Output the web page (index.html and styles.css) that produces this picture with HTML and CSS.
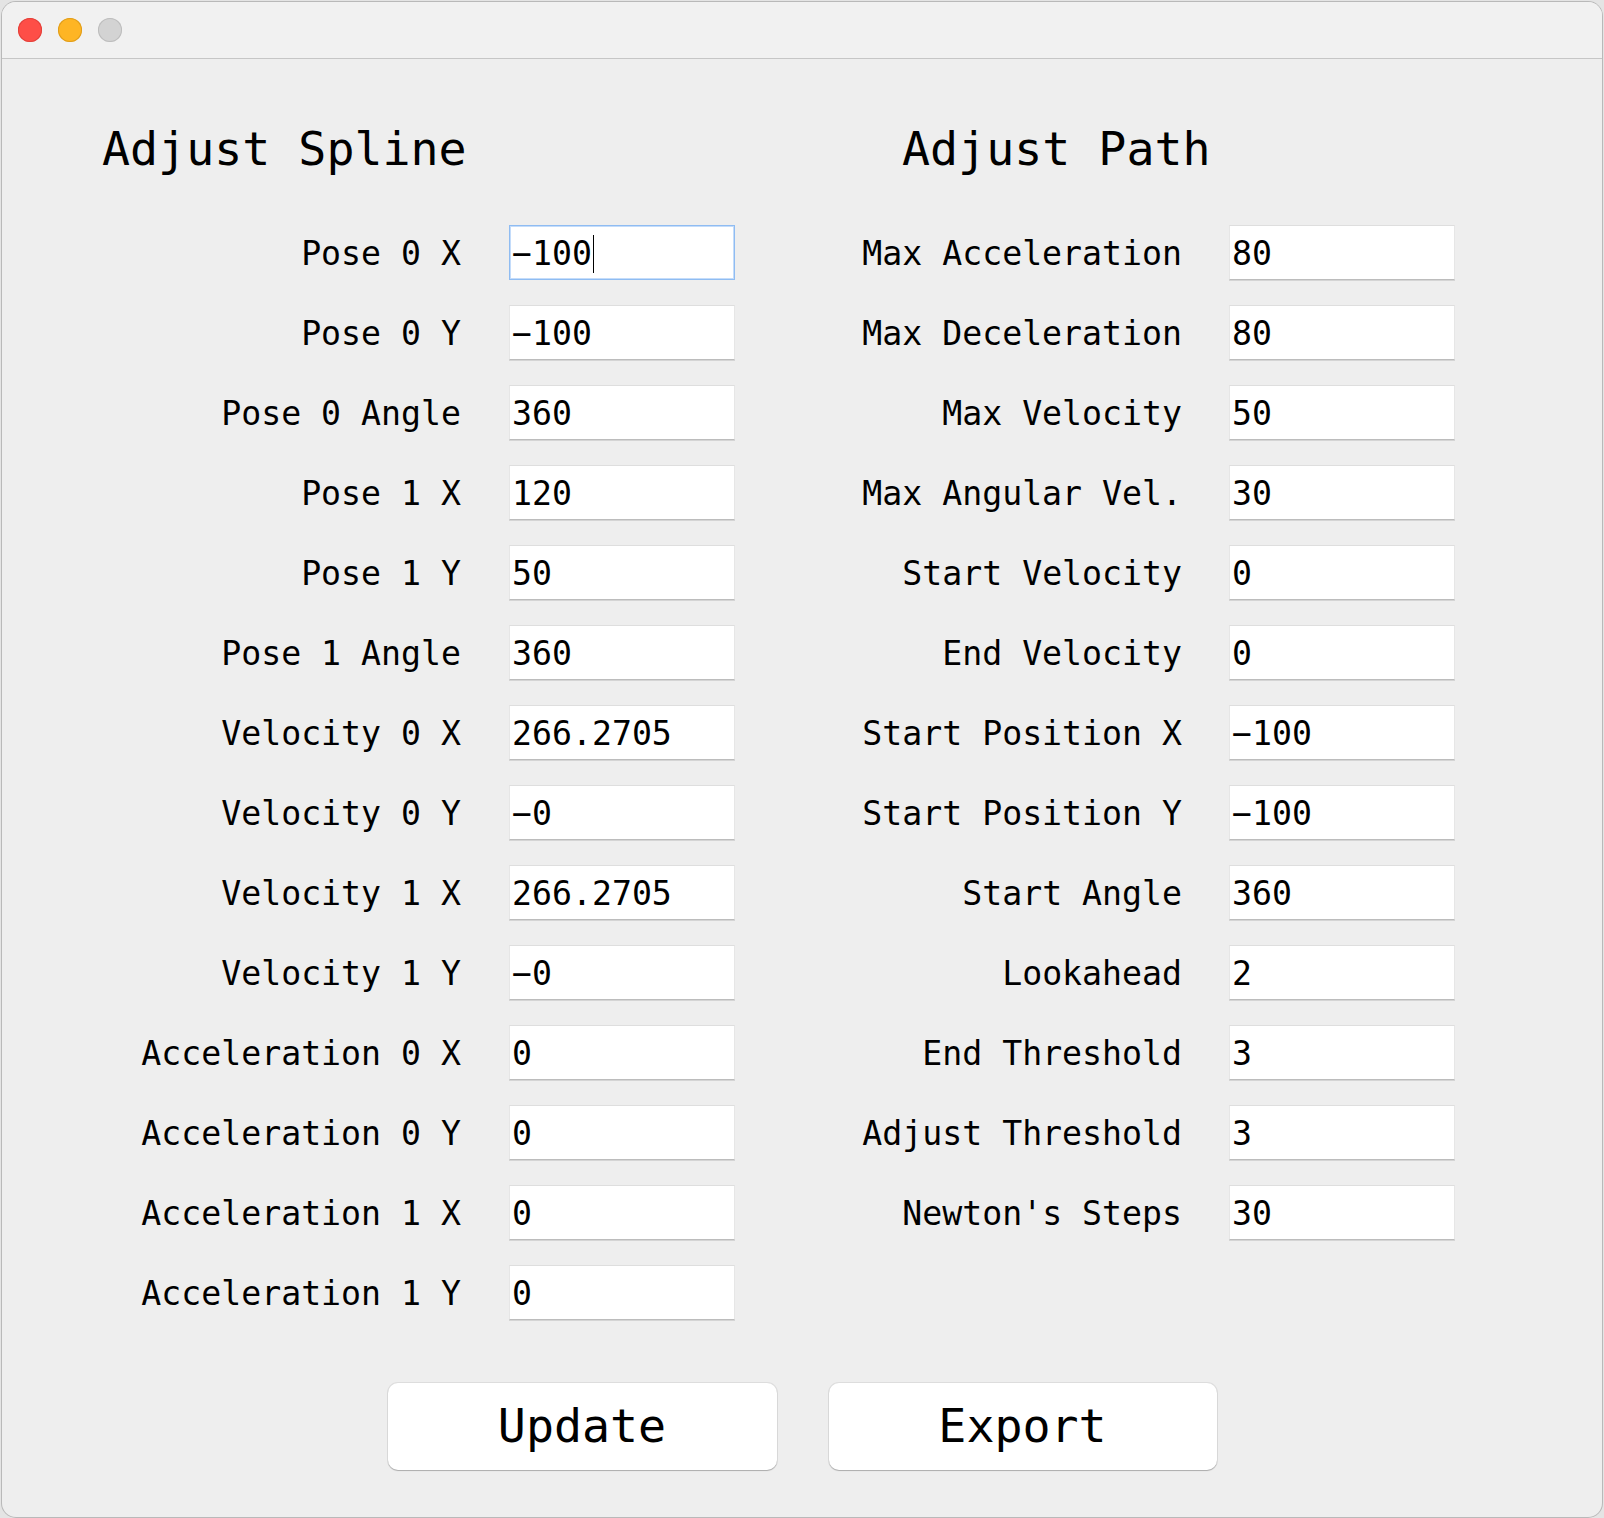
FILE: index.html
```html
<!DOCTYPE html>
<html lang="en">
<head>
<meta charset="utf-8">
<title>Adjust Spline</title>
<link rel="stylesheet" href="styles.css">
</head>
<body>
<div class="window">
  <div class="titlebar">
    <span class="light red"></span>
    <span class="light yellow"></span>
    <span class="light gray"></span>
  </div>
  <div class="content">
    <div class="panels">
      <section class="panel left">
        <h2 class="heading">Adjust Spline</h2>
        <div class="form form-left">
          <div class="label">Pose 0 X</div><div class="field focused">−100<span class="caret"></span></div>
          <div class="label">Pose 0 Y</div><div class="field">−100</div>
          <div class="label">Pose 0 Angle</div><div class="field">360</div>
          <div class="label">Pose 1 X</div><div class="field">120</div>
          <div class="label">Pose 1 Y</div><div class="field">50</div>
          <div class="label">Pose 1 Angle</div><div class="field">360</div>
          <div class="label">Velocity 0 X</div><div class="field">266.2705</div>
          <div class="label">Velocity 0 Y</div><div class="field">−0</div>
          <div class="label">Velocity 1 X</div><div class="field">266.2705</div>
          <div class="label">Velocity 1 Y</div><div class="field">−0</div>
          <div class="label">Acceleration 0 X</div><div class="field">0</div>
          <div class="label">Acceleration 0 Y</div><div class="field">0</div>
          <div class="label">Acceleration 1 X</div><div class="field">0</div>
          <div class="label">Acceleration 1 Y</div><div class="field">0</div>
        </div>
      </section>
      <section class="panel right">
        <h2 class="heading heading-right">Adjust Path</h2>
        <div class="form form-right">
          <div class="label">Max Acceleration</div><div class="field">80</div>
          <div class="label">Max Deceleration</div><div class="field">80</div>
          <div class="label">Max Velocity</div><div class="field">50</div>
          <div class="label">Max Angular Vel.</div><div class="field">30</div>
          <div class="label">Start Velocity</div><div class="field">0</div>
          <div class="label">End Velocity</div><div class="field">0</div>
          <div class="label">Start Position X</div><div class="field">−100</div>
          <div class="label">Start Position Y</div><div class="field">−100</div>
          <div class="label">Start Angle</div><div class="field">360</div>
          <div class="label">Lookahead</div><div class="field">2</div>
          <div class="label">End Threshold</div><div class="field">3</div>
          <div class="label">Adjust Threshold</div><div class="field">3</div>
          <div class="label">Newton's Steps</div><div class="field">30</div>
        </div>
      </section>
    </div>
    <div class="buttons">
      <button class="btn btn-update">Update</button>
      <button class="btn btn-export">Export</button>
    </div>
  </div>
</div>
</body>
</html>
```
FILE: styles.css
```css
* { box-sizing: border-box; }

html, body {
  margin: 0;
  padding: 0;
}

body {
  background: #e4e4e4;
  padding: 2px 2px 1px 2px;
  font-family: "DejaVu Sans Mono", "Liberation Mono", monospace;
  color: #000;
}

.window {
  width: 1600px;
  height: 1515px;
  background: #eeeeee;
  border-radius: 14px;
  overflow: hidden;
  box-shadow: 0 0 0 1px #b9b9b9;
  display: flex;
  flex-direction: column;
}

.titlebar {
  height: 57px;
  flex: 0 0 57px;
  background: #f1f1f1;
  border-bottom: 1px solid #c6c6c6;
  display: flex;
  align-items: flex-start;
  gap: 16px;
  padding: 16px 0 0 16px;
}

.light {
  width: 24px;
  height: 24px;
  border-radius: 50%;
  display: block;
}
.light.red { background: #fe4e47; box-shadow: inset 0 0 0 1px #e2413b; }
.light.yellow { background: #feb524; box-shadow: inset 0 0 0 1px #df9d1c; }
.light.gray { background: #d3d3d3; box-shadow: inset 0 0 0 1px #bdbdbd; }

.content {
  flex: 1;
  padding: 62px 0 0 100px;
}

.panels {
  display: flex;
  gap: 124px;
  align-items: flex-start;
}

.heading {
  margin: 0;
  font-weight: normal;
  font-size: 46.6px;
  line-height: 56px;
  height: 56px;
  white-space: nowrap;
}

.heading-right {
  padding-left: 43px;
}

.form {
  display: grid;
  margin-top: 48px;
  row-gap: 25px;
  grid-auto-rows: 55px;
}

.form-left {
  grid-template-columns: 359px 226px;
  column-gap: 48px;
}

.form-right {
  grid-template-columns: 323px 226px;
  column-gap: 47px;
}

.label {
  font-size: 33.2px;
  line-height: 57px;
  text-align: right;
  white-space: nowrap;
}

.field {
  font-size: 33.2px;
  line-height: 51px;
  background: #fff;
  border-top: 1px solid #dedede;
  border-left: 1px solid #e6e6e6;
  border-right: 1px solid #e6e6e6;
  border-bottom: 1px solid #bcbcbc;
  box-shadow: 0 1px 0 #d4d4d4;
  padding: 2px 0 0 2px;
  white-space: nowrap;
  overflow: hidden;
}

.field.focused {
  border: 1px solid #8fbcf2;
  box-shadow: inset 0 0 0 1px #c4dcfa;
}

.caret {
  display: inline-block;
  width: 1.5px;
  height: 38px;
  background: #000;
  vertical-align: -8px;
  margin-left: 1px;
}

.buttons {
  display: flex;
  justify-content: center;
  gap: 52px;
  margin: 63px 0 0 -100px;
}

.btn {
  width: 389px;
  height: 87px;
  background: #fff;
  border: none;
  border-radius: 10px;
  box-shadow: 0 0 0 1px rgba(0,0,0,0.07), 0 1px 1px rgba(0,0,0,0.22);
  font-family: "DejaVu Sans Mono", "Liberation Mono", monospace;
  font-size: 46.6px;
  line-height: 87px;
  padding: 0;
  color: #000;
}

.btn-export {
  width: 388px;
}
```
